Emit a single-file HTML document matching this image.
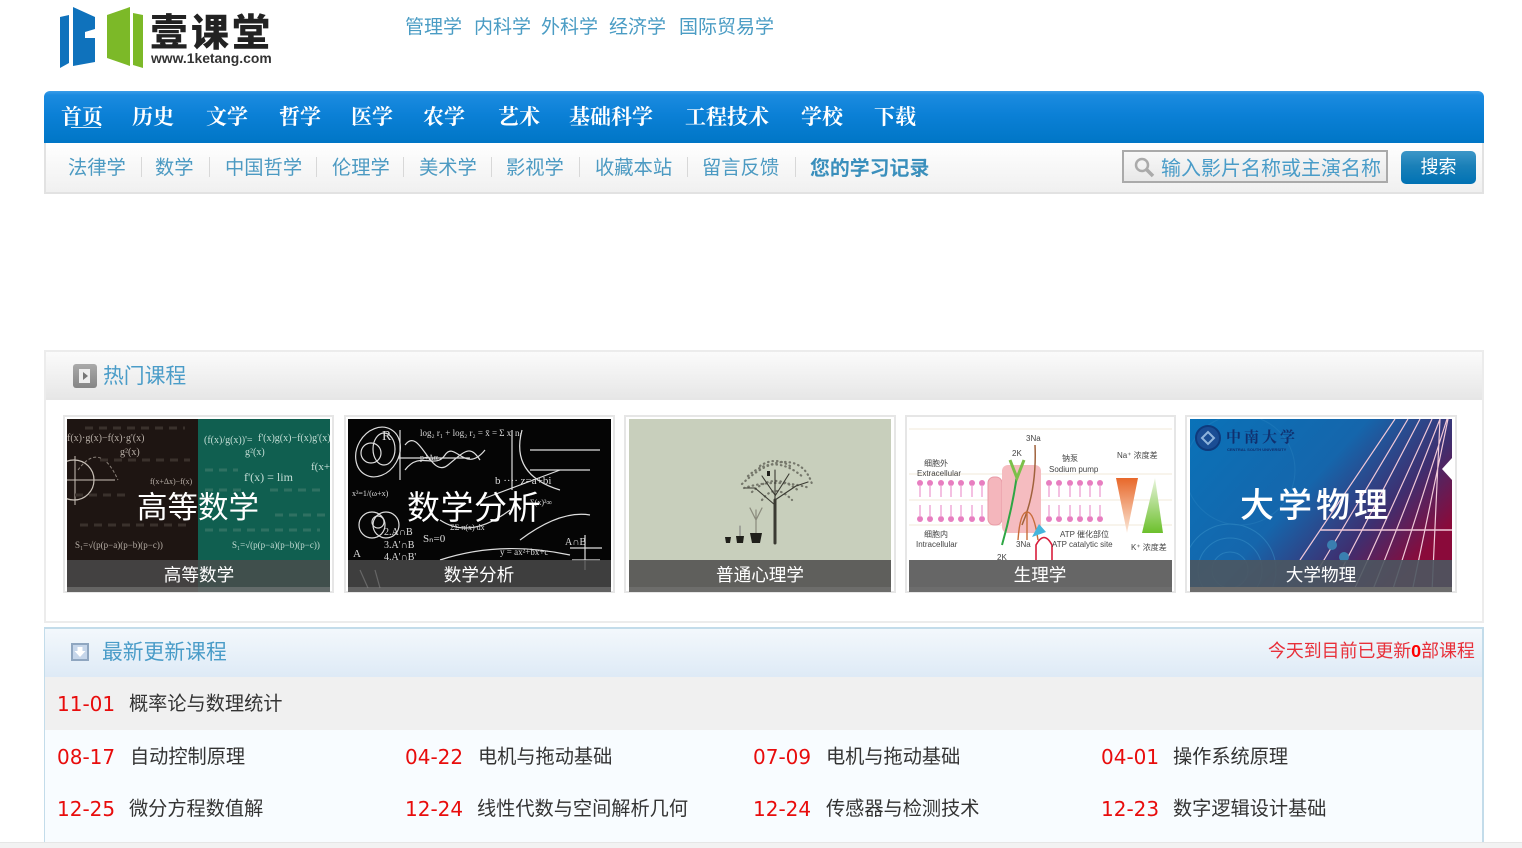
<!DOCTYPE html>
<html lang="zh"><head><meta charset="utf-8"><title>壹课堂</title>
<style>
html,body{margin:0;padding:0;background:#fff;width:1522px;height:848px;overflow:hidden}
body{position:relative;font-family:"Liberation Sans","Noto Sans CJK SC",sans-serif}
.a{position:absolute;white-space:nowrap}
a{color:inherit;text-decoration:none}
.top{top:14px;font-size:19px;line-height:28px;color:#4a9cc4}
.nav{top:102px;font-family:"Liberation Serif","Noto Serif CJK SC",serif;font-weight:700;font-size:21px;line-height:30px;color:#fff}
.sub{top:155px;font-size:19.3px;line-height:28px;color:#4c9ac2}
.sep{top:157px;width:1px;height:20px;background:#d8d8d8}
.d{font-family:"DejaVu Sans",sans-serif;font-size:20px;line-height:28px;color:#e80c0c}
.n{font-size:19.2px;line-height:28px;color:#333}
</style></head><body>

<svg class="a" style="left:0;top:0" width="300" height="80">
<path d="M60 17 L69 15 V63 L60 68Z" fill="#0f72bc"/>
<path d="M73 7 L95 17 V29 L85 32 V38 L95 38 V62 L73 66Z" fill="#0f72bc"/>
<path d="M107 15 L130 7 V66 L107 58Z" fill="#7cb928"/>
<path d="M133 13 L143 15 V68 L133 65Z" fill="#7cb928"/>
<text x="150" y="46" font-family="'Noto Sans CJK SC',sans-serif" font-weight="900" font-size="38" letter-spacing="3" fill="#222">壹课堂</text>
<text x="151" y="63" font-family="'Liberation Sans',sans-serif" font-weight="700" font-size="13.9" fill="#333">www.1ketang.com</text>
</svg>

<a class="a top" style="left:405px">管理学</a><a class="a top" style="left:474px">内科学</a><a class="a top" style="left:541px">外科学</a><a class="a top" style="left:609px">经济学</a><a class="a top" style="left:679px">国际贸易学</a>

<div class="a" style="left:44px;top:91px;width:1440px;height:52px;border-radius:6px 6px 0 0;background:linear-gradient(#3a9ce8 0,#1b8be0 4px,#0b80d6 24px,#0076c6 100%)"></div>
<a class="a nav" style="left:61px">首页</a><i class="a" style="left:71px;top:127px;width:30px;height:1px;background:#d8ecf8"></i>
<a class="a nav" style="left:132px">历史</a><a class="a nav" style="left:206px">文学</a><a class="a nav" style="left:279px">哲学</a><a class="a nav" style="left:351px">医学</a><a class="a nav" style="left:423px">农学</a><a class="a nav" style="left:498px">艺术</a><a class="a nav" style="left:569px">基础科学</a><a class="a nav" style="left:685px">工程技术</a><a class="a nav" style="left:801px">学校</a><a class="a nav" style="left:874px">下载</a>

<div class="a" style="left:44px;top:143px;width:1436px;height:49px;border:2px solid #e2e2e2;border-top:0;background:linear-gradient(#fff,#f0f0f0)"></div>
<a class="a sub" style="left:68px">法律学</a><i class="a sep" style="left:141px"></i>
<a class="a sub" style="left:155px">数学</a><i class="a sep" style="left:209px"></i>
<a class="a sub" style="left:225px">中国哲学</a><i class="a sep" style="left:316px"></i>
<a class="a sub" style="left:332px">伦理学</a><i class="a sep" style="left:403px"></i>
<a class="a sub" style="left:419px">美术学</a><i class="a sep" style="left:491px"></i>
<a class="a sub" style="left:506px">影视学</a><i class="a sep" style="left:579px"></i>
<a class="a sub" style="left:595px">收藏本站</a><i class="a sep" style="left:687px"></i>
<a class="a sub" style="left:702px">留言反馈</a><i class="a sep" style="left:795px"></i>
<a class="a sub" style="left:810px;font-size:19.9px;font-weight:700;color:#3a8fbc">您的学习记录</a>

<div class="a" style="left:1122px;top:150px;width:262px;height:29px;border:2px solid #aaa;background:linear-gradient(#f8f8f8,#e8e8e8)"></div>
<svg class="a" style="left:1132px;top:156px" width="24" height="24"><circle cx="10" cy="9" r="6" fill="none" stroke="#aaa" stroke-width="2.500"/><path d="M14.5 13.5L21 20" stroke="#aaa" stroke-width="3.5"/></svg>
<div class="a" style="left:1161px;top:154px;font-size:20px;line-height:30px;color:#4a9cc8">输入影片名称或主演名称</div>
<div class="a" style="left:1401px;top:151px;width:75px;height:33px;border-radius:5px;background:linear-gradient(#3d97c8,#1a80b8 45%,#0072b4);text-align:center;color:#fff;font-size:18px;line-height:32px">搜索</div>

<div class="a" style="left:44px;top:350px;width:1436px;height:269px;border:2px solid #ececec;background:#fff"></div>
<div class="a" style="left:46px;top:352px;width:1436px;height:48px;background:linear-gradient(#fbfbfb,#e6e6e6)"></div>
<div class="a" style="left:73px;top:364px;width:24px;height:24px;border-radius:3px;background:linear-gradient(#aaa,#858585)"></div>
<div class="a" style="left:79px;top:369px;width:11px;height:14px;background:#eee"></div>
<div class="a" style="left:83px;top:372px;width:0;height:0;border-left:5px solid #777;border-top:4px solid transparent;border-bottom:4px solid transparent"></div>
<div class="a" style="left:103px;top:362px;font-size:20.8px;line-height:30px;color:#4a9cc8">热门课程</div>

<svg class="a" style="left:0;top:0;font-family:'Liberation Serif',serif" width="1522" height="848">
<defs>
<clipPath id="c1"><rect x="67" y="419" width="263" height="173"/></clipPath>
<clipPath id="c2"><rect x="348" y="419" width="263" height="173"/></clipPath>
<clipPath id="c4"><rect x="909" y="419" width="263" height="173"/></clipPath>
<clipPath id="c5"><rect x="1190" y="419" width="262" height="173"/></clipPath>
<linearGradient id="bl" x1="0" x2="1" y1="0" y2=".6"><stop offset="0" stop-color="#0a72b8"/><stop offset=".5" stop-color="#1566ac"/><stop offset=".78" stop-color="#3e2f70"/><stop offset="1" stop-color="#8a0a3a"/></linearGradient>
<linearGradient id="or" x1="0" x2="0" y1="0" y2="1"><stop offset="0" stop-color="#e8682a"/><stop offset="1" stop-color="#fbe8d8"/></linearGradient>
<linearGradient id="gr" x1="0" x2="0" y1="0" y2="1"><stop offset="0" stop-color="#e8f4dc"/><stop offset="1" stop-color="#6cc02c"/></linearGradient>
</defs>
<g fill="#fff" stroke="#e6e6e6" stroke-width="2"><rect x="64" y="416" width="269" height="176"/><rect x="345" y="416" width="269" height="176"/><rect x="625" y="416" width="270" height="176"/><rect x="906" y="416" width="269" height="176"/><rect x="1186" y="416" width="270" height="176"/></g>

<g clip-path="url(#c1)">
<rect x="67" y="419" width="131" height="173" fill="#1e1512"/><rect x="198" y="419" width="132" height="173" fill="#105f50"/>
<g fill="#b9b0a8" font-size="10"><text x="67" y="441">f(x)·g(x)−f(x)·g'(x)</text><text x="120" y="455">g²(x)</text><text x="150" y="484" font-size="8">f(x+Δx)−f(x)</text><text x="75" y="548" font-size="9">S₁=√(p(p−a)(p−b)(p−c))</text></g>
<circle cx="74" cy="480" r="20" fill="none" stroke="#c9c1b8" stroke-width="1.2"/><path d="M67 480H115M75 456V505" stroke="#c9c1b8"/><path d="M78 470Q100 440 118 480" fill="none" stroke="#8b827a" stroke-dasharray="3 2"/>
<g fill="#c5ded6" font-size="10"><text x="204" y="443">(f(x)/g(x))'=</text><text x="258" y="441">f'(x)g(x)−f(x)g'(x)</text><text x="245" y="455">g²(x)</text><text x="244" y="481" font-size="12">f'(x) = lim</text><text x="311" y="470" font-size="11">f(x+</text><text x="232" y="548" font-size="9">S₁=√(p(p−a)(p−b)(p−c))</text></g>
<g stroke="#2f7162" stroke-width="3" stroke-dasharray="8 6"><path d="M205 470H238M205 490H245M270 490H325M205 530H320M275 515H325"/></g>
<g stroke="#3a312c" stroke-width="3" stroke-dasharray="8 6"><path d="M85 428H185M75 495H125M80 525H190M100 460H190"/></g>
<text x="198" y="518" text-anchor="middle" font-family="'Noto Sans CJK SC',sans-serif" font-size="30.5" fill="#fff">高等数学</text>
</g>

<g clip-path="url(#c2)">
<rect x="348" y="419" width="263" height="173" fill="#050505"/>
<g fill="none" stroke="#ddd" stroke-width="1.2">
<ellipse cx="378" cy="452" rx="21" ry="26" transform="rotate(30 378 452)"/><circle cx="371" cy="453" r="10"/><ellipse cx="384" cy="449" rx="11" ry="16"/>
<path d="M400 430V480M398 458H470M405 445C420 425 430 480 448 465S470 445 480 460"/><path d="M405 470C420 450 435 470 445 455S465 475 485 450"/>
<path d="M512 430V490M522 430Q510 475 560 490M530 450H600M530 470H590"/>
<circle cx="372" cy="525" r="13"/><circle cx="386" cy="525" r="13"/><circle cx="378" cy="522" r="6"/>
<path d="M570 548H602M585 535V570M572 560H600M360 570L368 588M375 570L380 588"/>
<path d="M480 500L560 470M440 520Q470 540 510 510M520 540Q560 510 590 515M440 560Q500 540 570 555"/>
</g>
<g fill="#ddd" font-size="9"><text x="420" y="436">log₂ r₁ + log₂ r₂ = x̄ = Σ xᵢ nᵢ</text><text x="495" y="484" font-size="11">b ···· z=a+bi</text><text x="352" y="496" font-size="8">x²=1/(ω+x)</text><text x="382" y="440" font-size="14">R</text><text x="420" y="460" font-size="8">p+Δα</text><text x="353" y="557" font-size="11">A</text><text x="384" y="535" font-size="10">2.A∩B</text><text x="384" y="548" font-size="10">3.A'∩B</text><text x="384" y="560" font-size="10">4.A'∩B'</text><text x="423" y="542" font-size="11">Sₙ=0</text><text x="500" y="555" font-size="9">y = ax²+bx+c</text><text x="565" y="545" font-size="10">A∩B</text><text x="450" y="530" font-size="8">ΣΣ π(x) dx</text><text x="530" y="505" font-size="8">Σ(x)²∞</text></g>
<text x="474" y="519" text-anchor="middle" font-family="'Noto Sans CJK SC',sans-serif" font-size="33" letter-spacing=".5" fill="#fff">数学分析</text>
</g>

<rect x="629" y="419" width="262" height="173" fill="#c8cfbc"/>
<g fill="none" stroke-linecap="round">
<g stroke="#5a5a50" stroke-width="2.2" stroke-dasharray=".5 4" opacity=".75"><path d="M742 484Q765 462 785 462T812 484"/><path d="M748 476Q775 452 804 478"/><path d="M752 492Q775 470 800 492"/><path d="M760 466Q775 456 790 466"/><path d="M744 488Q775 478 810 488"/><path d="M762 500Q775 482 792 500"/></g>
<g stroke="#3a3a32"><path d="M775 543V500" stroke-width="3"/><path d="M775 505L755 488M775 500L796 486M775 500V470M775 495L762 476M775 496L789 474M755 488L745 488M796 486L808 482" stroke-width="1.1"/></g>
<path d="M756 534V510M756 520L750 508M756 520L762 508" stroke="#8a8a7c" stroke-width="1.2"/>
<path d="M740 536V526" stroke="#777" stroke-width="1"/>
</g>
<path d="M767 471h3v5h-3zM750 533h12l-2 10h-8zM736 536h8l-1 7h-6zM725 537h6l-1 6h-4z" fill="#1f1f1a"/>

<g clip-path="url(#c4)">
<rect x="909" y="419" width="263" height="173" fill="#fff"/>
<g stroke="#f2ead8" fill="none"><path d="M909 429H1172M909 474H1172M909 500H1172M909 525H1172"/></g>
<rect x="988" y="477" width="14" height="48" rx="6" fill="#f4b6bc" stroke="#e89aa6"/>
<rect x="1002" y="465" width="39" height="68" rx="6" fill="#f5bcc0"/>
<g fill="#e77ec0" stroke="none"><circle cx="920" cy="483" r="3"/><circle cx="930" cy="483" r="3"/><circle cx="941" cy="483" r="3"/><circle cx="951" cy="483" r="3"/><circle cx="961" cy="483" r="3"/><circle cx="972" cy="483" r="3"/><circle cx="982" cy="483" r="3"/><circle cx="1049" cy="483" r="3"/><circle cx="1059" cy="483" r="3"/><circle cx="1070" cy="483" r="3"/><circle cx="1080" cy="483" r="3"/><circle cx="1090" cy="483" r="3"/><circle cx="1100" cy="483" r="3"/>
<circle cx="920" cy="519" r="3"/><circle cx="930" cy="519" r="3"/><circle cx="941" cy="519" r="3"/><circle cx="951" cy="519" r="3"/><circle cx="961" cy="519" r="3"/><circle cx="972" cy="519" r="3"/><circle cx="982" cy="519" r="3"/><circle cx="1049" cy="519" r="3"/><circle cx="1059" cy="519" r="3"/><circle cx="1070" cy="519" r="3"/><circle cx="1080" cy="519" r="3"/><circle cx="1090" cy="519" r="3"/><circle cx="1100" cy="519" r="3"/></g>
<g stroke="#f0a6d6" stroke-width="1.4"><path d="M920 485V497M930 485V497M941 485V497M951 485V497M961 485V497M972 485V497M982 485V497M1049 485V497M1059 485V497M1070 485V497M1080 485V497M1090 485V497M1100 485V497M920 505V517M930 505V517M941 505V517M951 505V517M961 505V517M972 505V517M982 505V517M1049 505V517M1059 505V517M1070 505V517M1080 505V517M1090 505V517M1100 505V517"/></g>
<path d="M1002 545Q1012 510 1017 475" stroke="#2ea644" stroke-width="2" fill="none"/><path d="M1010 460L1017 478L1024 460" stroke="#7cc04a" stroke-width="3" fill="none"/>
<path d="M1035 445Q1037 490 1022 525" stroke="#a0623c" stroke-width="1.5" fill="none"/>
<path d="M1018 540Q1020 512 1027 512T1038 540M1027 512V540" stroke="#c86c3a" stroke-width="1.4" fill="none"/>
<path d="M1032 537L1039 524L1046 532Z" fill="#45b5dc"/>
<path d="M1036 592V545Q1044 530 1052 545V592" stroke="#d81e3c" stroke-width="1.6" fill="none"/>
<path d="M1116 478H1138L1127 533Z" fill="url(#or)"/><path d="M1155 478L1163 533H1142Z" fill="url(#gr)"/>
<g fill="#444" font-family="'Liberation Sans','Noto Sans CJK SC',sans-serif" font-size="8"><text x="1026" y="441">3Na</text><text x="1012" y="456">2K</text><text x="1062" y="461">钠泵</text><text x="1049" y="472">Sodium pump</text><text x="924" y="466">细胞外</text><text x="917" y="476">Extracellular</text><text x="924" y="537">细胞内</text><text x="916" y="547">Intracellular</text><text x="1016" y="547">3Na</text><text x="997" y="560">2K</text><text x="1060" y="537">ATP 催化部位</text><text x="1052" y="547">ATP catalytic site</text><text x="1117" y="458">Na⁺ 浓度差</text><text x="1131" y="550">K⁺ 浓度差</text></g>
</g>

<g clip-path="url(#c5)">
<rect x="1190" y="419" width="262" height="173" fill="url(#bl)"/>
<g fill="none" stroke="#3f98cc" opacity=".45"><circle cx="1230" cy="570" r="18"/><circle cx="1230" cy="570" r="32"/><circle cx="1230" cy="570" r="46"/><circle cx="1240" cy="470" r="55" opacity=".5"/></g>
<g stroke="#f0c8d8" stroke-width="1.2" fill="none"><path d="M1300 560L1395 419M1318 570L1408 419M1336 580L1420 419M1354 590L1432 419M1372 592L1440 419M1392 592L1447 419M1412 592L1448 419M1432 592L1440 419"/><path d="M1320 530H1452" stroke-width="1.5"/></g>
<path d="M1452 480L1442 469L1452 458" fill="#fff"/>
<g fill="#3a7fb0"><circle cx="1332" cy="545" r="5"/><circle cx="1344" cy="557" r="5"/></g>
<circle cx="1208" cy="438" r="12" fill="#1a4d94" stroke="#0e3a7c" stroke-width="2"/><path d="M1202 438l6-6 6 6-6 6z" fill="none" stroke="#8fb4dc" stroke-width="2"/>
<text x="1226" y="442" font-family="'Noto Serif CJK SC',serif" font-weight="700" font-size="15" letter-spacing="3" fill="#10306e">中南大学</text>
<text x="1227" y="451" font-size="4" font-family="'Liberation Sans',sans-serif" font-weight="700" fill="#10306e">CENTRAL SOUTH UNIVERSITY</text>
<text x="1316" y="517" text-anchor="middle" font-family="'Noto Sans CJK SC',sans-serif" font-weight="500" font-size="34" letter-spacing="4" fill="#fff">大学物理</text>
</g>

<g font-family="'Liberation Sans','Noto Sans CJK SC',sans-serif" font-size="17.6" text-anchor="middle" fill="#fff">
<rect x="67" y="560" width="263" height="27" fill="#4c4c4c" opacity=".82"/><rect x="67" y="587" width="263" height="5" fill="#6d6d6d" opacity=".9"/><text x="199" y="581">高等数学</text>
<rect x="348" y="560" width="263" height="27" fill="#4c4c4c" opacity=".82"/><rect x="348" y="587" width="263" height="5" fill="#6d6d6d" opacity=".9"/><text x="479" y="581">数学分析</text>
<rect x="629" y="560" width="262" height="27" fill="#5f5f5c"/><rect x="629" y="587" width="262" height="5" fill="#6d6d6b"/><text x="760" y="581">普通心理学</text>
<rect x="909" y="560" width="263" height="27" fill="#666"/><rect x="909" y="587" width="263" height="5" fill="#6d6d6d"/><text x="1040" y="581">生理学</text>
<rect x="1190" y="560" width="262" height="27" fill="#4b5660" opacity=".9"/><rect x="1190" y="587" width="262" height="5" fill="#6d6d6d"/><text x="1321" y="581">大学物理</text>
</g>
</svg>

<div class="a" style="left:0;top:842px;width:1522px;height:6px;background:#f2f2f2;border-top:1px solid #e6e6e6;box-sizing:border-box"></div>
<div class="a" style="left:44px;top:627px;width:1440px;height:215px;box-sizing:border-box;border:2px solid #c3dcea;border-bottom:0;border-left-width:1px;background:#f8fcff"></div>
<div class="a" style="left:45px;top:629px;width:1437px;height:48px;background:linear-gradient(#f3f8fc,#deeaf6)"></div>
<div class="a" style="left:45px;top:677px;width:1437px;height:53px;background:#f0f0f0"></div>
<div class="a" style="left:71px;top:643px;width:14px;height:14px;border:2px solid #8fa6c0;background:#c6d6ea"></div>
<svg class="a" style="left:73px;top:645px" width="14" height="14"><path d="M4.5 2H9.5V6H12.5L7 12L1.500 6H4.500Z" fill="#fff"/></svg>
<div class="a" style="left:102px;top:638px;font-size:20.8px;line-height:30px;color:#4a9cc8">最新更新课程</div>
<div class="a" style="left:1268px;top:638px;font-size:17.9px;line-height:26px;color:#e8303a">今天到目前已更新<b style="color:#f00">0</b>部课程</div>

<span class="a d" style="left:57px;top:690px">11-01</span><span class="a n" style="left:129px;top:691px">概率论与数理统计</span>

<span class="a d" style="left:57px;top:743px">08-17</span><span class="a n" style="left:130px;top:744px">自动控制原理</span>
<span class="a d" style="left:405px;top:743px">04-22</span><span class="a n" style="left:478px;top:744px">电机与拖动基础</span>
<span class="a d" style="left:753px;top:743px">07-09</span><span class="a n" style="left:826px;top:744px">电机与拖动基础</span>
<span class="a d" style="left:1101px;top:743px">04-01</span><span class="a n" style="left:1173px;top:744px">操作系统原理</span>

<span class="a d" style="left:57px;top:795px">12-25</span><span class="a n" style="left:129px;top:796px">微分方程数值解</span>
<span class="a d" style="left:405px;top:795px">12-24</span><span class="a n" style="left:477px;top:796px">线性代数与空间解析几何</span>
<span class="a d" style="left:753px;top:795px">12-24</span><span class="a n" style="left:826px;top:796px">传感器与检测技术</span>
<span class="a d" style="left:1101px;top:795px">12-23</span><span class="a n" style="left:1173px;top:796px">数字逻辑设计基础</span>

</body></html>
